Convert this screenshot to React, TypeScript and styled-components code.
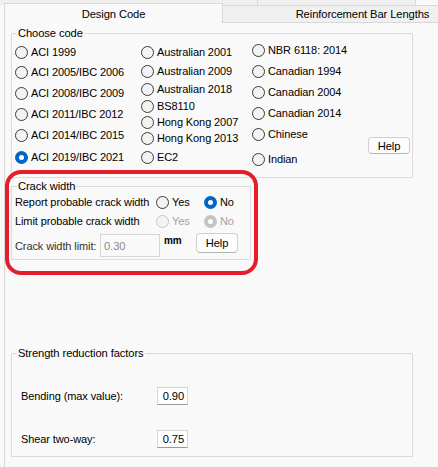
import React from 'react';
import styled, { createGlobalStyle } from 'styled-components';

const GlobalStyle = createGlobalStyle`
  html, body {
    margin: 0;
    padding: 0;
    background: #f9f9f9;
  }
  body {
    font-family: "Liberation Sans", Arial, sans-serif;
    font-size: 11px;
    letter-spacing: -0.1px;
    color: #000;
  }
  * {
    box-sizing: border-box;
  }
`;

const Window = styled.div`
    width: 438px;
    height: 467px;
    overflow: hidden;
    background: #f9f9f9;
`;

const TabStrip = styled.div`
    display: grid;
    height: 23px;
    overflow: hidden;
`;

const BackRow = styled.div`
    grid-area: 1 / 1;
    display: flex;
    height: 5px;
    align-self: start;
`;

const BackTab = styled.div<{ $w: number }>`
    width: ${(p) => p.$w}px;
    flex: none;
    height: 5px;
    background: #f0f0f0;
    border-right: 1px solid #d9d9d9;
`;

const FrontRow = styled.div`
    grid-area: 1 / 1;
    display: flex;
    align-items: flex-end;
    padding-left: 4px;
`;

const ActiveTab = styled.div`
    flex: none;
    width: 219px;
    height: 20px;
    background: #f9f9f9;
    border: 1px solid #d9d9d9;
    border-bottom: none;
    display: flex;
    align-items: center;
    justify-content: center;
    font-size: 11.2px;
`;

const InactiveTab = styled.div`
    flex: none;
    width: 280px;
    height: 18px;
    background: #f0f0f0;
    border: 1px solid #d9d9d9;
    border-left: none;
    display: flex;
    align-items: center;
    justify-content: center;
    font-size: 11.2px;
`;

const Panel = styled.div`
    margin-left: 4px;
    height: 444px;
    border-left: 1px solid #d9d9d9;
    padding-left: 6px;
    display: flex;
    flex-direction: column;
    align-items: flex-start;
`;

const GroupBox = styled.div<{ $w: number; $mt: number }>`
    width: ${(p) => p.$w}px;
    margin-top: ${(p) => p.$mt}px;
    border: 1px solid #dcdcdc;
`;

const Legend = styled.div`
    width: fit-content;
    height: 14px;
    line-height: 14px;
    margin: -8px 0 0 5px;
    padding: 0 1px;
    background: #f9f9f9;
    font-size: 11.2px;
`;

const CodeGrid = styled.div`
    display: grid;
    grid-template-columns: 126px 111px 1fr auto;
    padding: 0 2px 10px 3px;
`;

const Column = styled.div`
    display: flex;
    flex-direction: column;
`;

const Option = styled.label<{ $mt?: number; $w?: number; $disabled?: boolean }>`
    display: flex;
    align-items: center;
    gap: 3px;
    height: 16px;
    margin-top: ${(p) => p.$mt ?? 0}px;
    ${(p) => (p.$w ? `width: ${p.$w}px; flex: none;` : '')}
    white-space: nowrap;
    color: ${(p) => (p.$disabled ? '#a3a3a3' : '#000')};
`;

const RadioDot = styled.span<{ $checked?: boolean; $disabled?: boolean }>`
    flex: none;
    width: 13px;
    height: 13px;
    border-radius: 50%;
    background: ${(p) => (p.$checked ? '#fff' : '#f3f3f3')};
    border: ${(p) =>
        p.$checked
            ? `4px solid ${p.$disabled ? '#c4c4c4' : '#0067c0'}`
            : `1px solid ${p.$disabled ? '#c6c6c6' : '#3a3a3a'}`};
`;

const Button = styled.button<{ $h: number; $mt?: number }>`
    width: 42px;
    height: ${(p) => p.$h}px;
    margin-top: ${(p) => p.$mt ?? 0}px;
    align-self: start;
    padding: 0;
    background: #fdfdfd;
    border: 1px solid #d0d0d0;
    border-bottom-color: #b5b5b5;
    border-radius: 4px;
    font-family: inherit;
    font-size: 11.2px;
    letter-spacing: -0.1px;
    color: #000;
`;

const CrackWrap = styled.div`
    position: relative;
    margin-top: 8px;
`;

const Annotation = styled.div`
    position: absolute;
    left: -6px;
    top: -16px;
    right: -7px;
    bottom: -15px;
    border: 4px solid #e61e2a;
    border-radius: 16px;
    pointer-events: none;
`;

const Rows = styled.div<{ $pl: number; $pb: number }>`
    display: flex;
    flex-direction: column;
    padding: 0 0 ${(p) => p.$pb}px ${(p) => p.$pl}px;
`;

const Row = styled.div<{ $mt: number; $h: number }>`
    display: flex;
    align-items: center;
    height: ${(p) => p.$h}px;
    margin-top: ${(p) => p.$mt}px;
`;

const Label = styled.span<{ $w: number; $muted?: boolean }>`
    flex: none;
    width: ${(p) => p.$w}px;
    white-space: nowrap;
    color: ${(p) => (p.$muted ? '#333' : '#000')};
`;

const Field = styled.div<{ $w: number; $h: number; $disabled?: boolean; $right?: boolean }>`
    flex: none;
    width: ${(p) => p.$w}px;
    height: ${(p) => p.$h}px;
    display: flex;
    align-items: center;
    justify-content: ${(p) => (p.$right ? 'flex-end' : 'flex-start')};
    padding: 0 3px;
    background: ${(p) => (p.$disabled ? '#f9f9f9' : '#fff')};
    border: 1px solid #d6d6d6;
    border-bottom-color: ${(p) => (p.$disabled ? '#d6d6d6' : '#9a9a9a')};
    color: ${(p) => (p.$disabled ? '#8c8c8c' : '#000')};
    font-size: 11.2px;
`;

const Unit = styled.span`
    flex: none;
    width: 36px;
    padding-left: 4px;
    align-self: start;
    line-height: 14px;
    font-size: 10px;
    font-weight: bold;
`;

type Code = { label: string; mt: number; checked?: boolean };

const columns: Code[][] = [
    [
        { label: 'ACI 1999', mt: 4 },
        { label: 'ACI 2005/IBC 2006', mt: 4 },
        { label: 'ACI 2008/IBC 2009', mt: 5 },
        { label: 'ACI 2011/IBC 2012', mt: 5 },
        { label: 'ACI 2014/IBC 2015', mt: 5 },
        { label: 'ACI 2019/IBC 2021', mt: 6, checked: true },
    ],
    [
        { label: 'Australian 2001', mt: 4 },
        { label: 'Australian 2009', mt: 3 },
        { label: 'Australian 2018', mt: 2 },
        { label: 'BS8110', mt: 1 },
        { label: 'Hong Kong 2007', mt: 0 },
        { label: 'Hong Kong 2013', mt: 0 },
        { label: 'EC2', mt: 3 },
    ],
    [
        { label: 'NBR 6118: 2014', mt: 2 },
        { label: 'Canadian 1994', mt: 5 },
        { label: 'Canadian 2004', mt: 5 },
        { label: 'Canadian 2014', mt: 5 },
        { label: 'Chinese', mt: 5 },
        { label: 'Indian', mt: 9 },
    ],
];

const App = () => {
    return (
        <Window>
            <GlobalStyle />
            <TabStrip>
                <BackRow>
                    <BackTab $w={258} />
                    <BackTab $w={158} />
                </BackRow>
                <FrontRow>
                    <ActiveTab>Design Code</ActiveTab>
                    <InactiveTab>Reinforcement Bar Lengths</InactiveTab>
                </FrontRow>
            </TabStrip>
            <Panel>
                <GroupBox $w={402} $mt={10}>
                    <Legend>Choose code</Legend>
                    <CodeGrid>
                        {columns.map((col, i) => (
                            <Column key={i}>
                                {col.map((c) => (
                                    <Option key={c.label} $mt={c.mt}>
                                        <RadioDot $checked={c.checked} />
                                        {c.label}
                                    </Option>
                                ))}
                            </Column>
                        ))}
                        <Button $h={17} $mt={97}>Help</Button>
                    </CodeGrid>
                </GroupBox>

                <CrackWrap>
                    <GroupBox $w={240} $mt={0}>
                        <Legend>Crack width</Legend>
                        <Rows $pl={3} $pb={2}>
                            <Row $mt={1} $h={16}>
                                <Label $w={141}>Report probable crack width</Label>
                                <Option $w={48}>
                                    <RadioDot />
                                    Yes
                                </Option>
                                <Option>
                                    <RadioDot $checked />
                                    No
                                </Option>
                            </Row>
                            <Row $mt={3} $h={16}>
                                <Label $w={141}>Limit probable crack width</Label>
                                <Option $w={48} $disabled>
                                    <RadioDot $disabled />
                                    Yes
                                </Option>
                                <Option $disabled>
                                    <RadioDot $checked $disabled />
                                    No
                                </Option>
                            </Row>
                            <Row $mt={5} $h={23}>
                                <Label $w={85} $muted>Crack width limit:</Label>
                                <Field $w={60} $h={23} $disabled>0.30</Field>
                                <Unit>mm</Unit>
                                <Button $h={20} $mt={-1}>Help</Button>
                            </Row>
                        </Rows>
                    </GroupBox>
                    <Annotation />
                </CrackWrap>

                <GroupBox $w={402} $mt={93}>
                    <Legend>Strength reduction factors</Legend>
                    <Rows $pl={9} $pb={8}>
                        <Row $mt={27} $h={18}>
                            <Label $w={136}>Bending (max value):</Label>
                            <Field $w={31} $h={18} $right>0.90</Field>
                        </Row>
                        <Row $mt={25} $h={18}>
                            <Label $w={136}>Shear two-way:</Label>
                            <Field $w={31} $h={18} $right>0.75</Field>
                        </Row>
                    </Rows>
                </GroupBox>
            </Panel>
        </Window>
    );
};

export default App;
